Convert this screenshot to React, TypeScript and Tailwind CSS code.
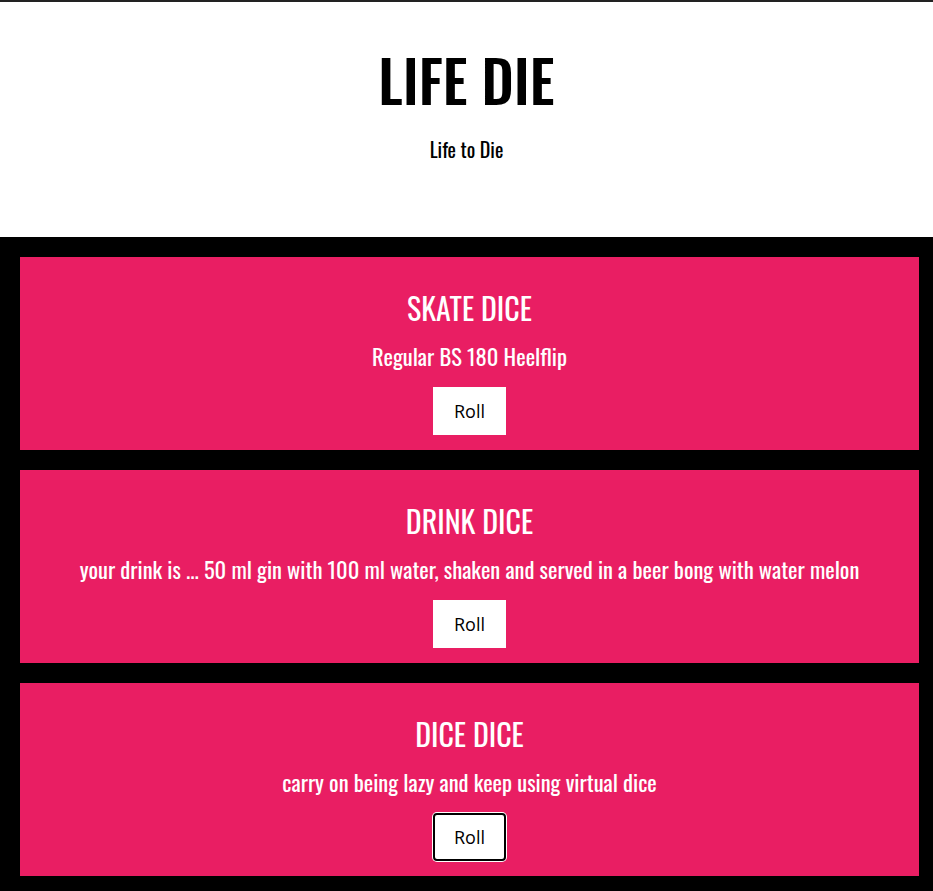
import React from "react";

function Card({ title, text, focused }: { title: string; text: string; focused?: boolean }) {
  return (
    <section className="bg-[#e91e63] h-[193px] flex flex-col items-center pt-[32px] text-white font-['Oswald',sans-serif]">
      <h2 className="text-[30px] leading-[38px] font-normal">{title}</h2>
      <p className="text-[22.5px] leading-[30px] mt-[14px]">{text}</p>
      <button
        className={
          "mt-[16px] w-[73px] h-[48px] bg-white text-black text-[18px] font-['Open_Sans','Noto_Sans',sans-serif] " +
          (focused ? "rounded-[4px] border-2 border-black ring-1 ring-white" : "")
        }
      >
        Roll
      </button>
    </section>
  );
}

export default function App() {
  return (
    <div className="w-full min-h-[891px] bg-black">
      <header className="bg-white h-[237px] border-t-2 border-[#222] flex flex-col items-center pt-[33px] font-['Oswald',sans-serif] text-black">
        <h1 className="text-[58px] leading-[88px] font-medium">LIFE DIE</h1>
        <p className="text-[20px] leading-[26px] mt-[13px]">Life to Die</p>
      </header>
      <main className="pl-[20px] pr-[14px] py-[20px] flex flex-col gap-[20px]">
        <Card title="SKATE DICE" text="Regular BS 180 Heelflip" />
        <Card title="DRINK DICE" text="your drink is ... 50 ml gin with 100 ml water, shaken and served in a beer bong with water melon" />
        <Card title="DICE DICE" text="carry on being lazy and keep using virtual dice" focused />
      </main>
    </div>
  );
}
